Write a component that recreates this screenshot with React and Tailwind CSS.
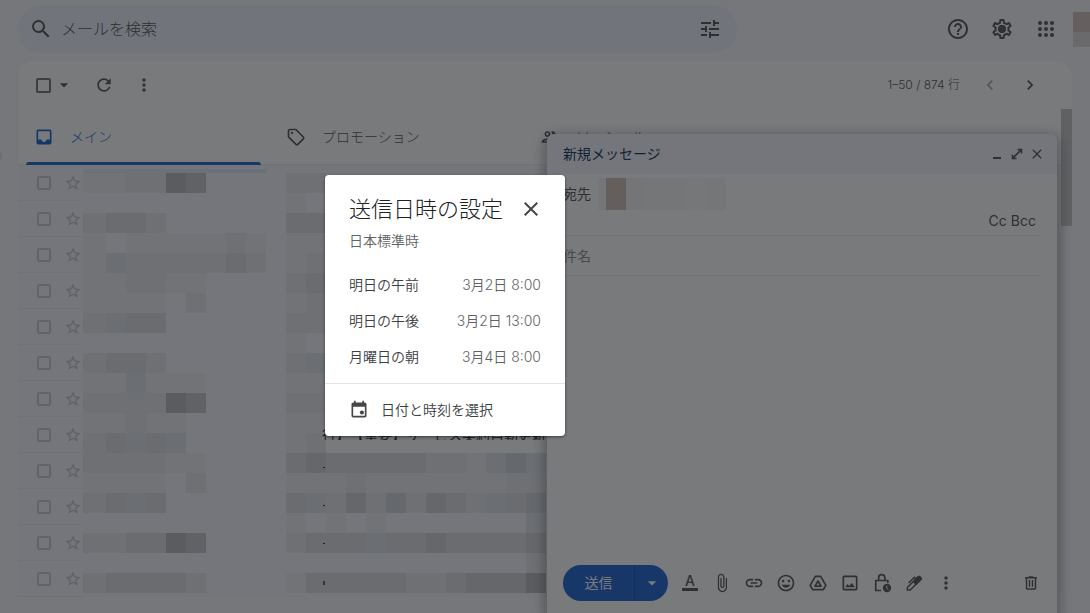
import {
  MdArrowDropDown,
  MdAttachFile,
  MdChevronLeft,
  MdChevronRight,
  MdClose,
  MdHelpOutline,
  MdInbox,
  MdLink,
  MdMoreVert,
  MdOutlineImage,
  MdOutlineMood,
  MdOutlinePeople,
  MdOutlineSettings,
  MdRefresh,
  MdSearch,
  MdStarOutline,
  MdTune,
} from 'react-icons/md';

const mailIds = [1, 2, 3, 4, 5, 6, 7, 8, 9, 10, 11, 12];

// one string per 20px band, one character per cell
const senderMosaic = [
  '112256....22...........',
  '..........1............',
  '2332......33...........',
  '1.1111121.11...........',
  '1b2222232.12...........',
  '112211....23...........',
  '1111.2....12...........',
  '2b33......22...........',
  '..........1............',
  '2332......2b...........',
  '11b111....11...........',
  '222256....22...........',
  '11211.....11...........',
  '23b3b.....12wwwwwwwwwww',
  '222211....3433333221bBb',
  '1111.2....1112111111122',
  '23b3......3b242B2432b3B',
  '..........1.1.1.......b',
  '223356....2333b33433334',
  '......................2',
  '233332....1333332234445',
];

const cellColors = {
  1: 'bg-[#ebedf1]',
  2: 'bg-[#e4e5e9]',
  3: 'bg-[#dbdce0]',
  4: 'bg-[#cfd0d5]',
  5: 'bg-[#b4b5b8]',
  6: 'bg-[#c1c2c5]',
  b: 'bg-[#dde4e9]',
  B: 'bg-[#ccd5da]',
  w: 'bg-white',
};

const scheduleOptions = [
  { label: '明日の午前', time: '3月2日 8:00' },
  { label: '明日の午後', time: '3月2日 13:00' },
  { label: '月曜日の朝', time: '3月4日 8:00' },
];

function TagIcon() {
  return (
    <svg width="20" height="20" viewBox="0 0 24 24" fill="none" stroke="currentColor" strokeWidth="2">
      <path d="M3 4.5C3 3.7 3.7 3 4.5 3h7.3l9 9a1.6 1.6 0 0 1 0 2.2l-6.6 6.6a1.6 1.6 0 0 1-2.2 0l-9-9z" />
      <circle cx="7.2" cy="7.2" r="1.4" fill="currentColor" stroke="none" />
    </svg>
  );
}

function AppsIcon() {
  return (
    <svg width="24" height="24" viewBox="0 0 24 24" fill="currentColor">
      {[6, 12, 18].map((y) => [6, 12, 18].map((x) => <circle key={`${x}-${y}`} cx={x} cy={y} r="2" />))}
    </svg>
  );
}

function ExpandIcon() {
  return (
    <svg width="12" height="12" viewBox="0 0 12 12" fill="none" stroke="currentColor" strokeWidth="1.6">
      <path d="M6.500 1.500h4v4M10.500 1.500l-9 9M1.500 6.500v4h4" />
    </svg>
  );
}

function DriveIcon() {
  return (
    <svg width="20" height="20" viewBox="0 0 24 24" fill="none" stroke="currentColor" strokeWidth="2" strokeLinejoin="round">
      <path d="M8.8 4h6.4l6.2 10.8-3 5.2H5.6l-3-5.2z" />
      <path d="M12 9.6 8.4 15.8h7.2z" />
    </svg>
  );
}

function LockClockIcon() {
  return (
    <svg width="20" height="20" viewBox="0 0 24 24" fill="none" stroke="currentColor" strokeWidth="2">
      <path d="M11 21H4.500V9h14.500v3M8 9V5.700a3.700 3.700 0 0 1 7.400 0V9" />
      <circle cx="18" cy="18" r="5" fill="currentColor" stroke="none" />
      <path d="M17.700 15.200v3l2 1.800" stroke="#fff" strokeWidth="1.200" />
    </svg>
  );
}

function PenIcon() {
  return (
    <svg width="20" height="20" viewBox="0 0 24 24" fill="none" stroke="currentColor" strokeWidth="1.8" strokeLinejoin="round">
      <path d="M4 20.500v-3.200L16.500 4.800l3.400 3L7.500 20.500z" />
      <path d="m11.500 10.500 5-5.500L20 8.200l-5.500 5.500z" fill="currentColor" />
      <path d="M17 5.500 18.500 4l2.500 2.500L19.500 8z" fill="currentColor" />
      <path d="M5.500 12 12.500 5l1.500 1.500" />
    </svg>
  );
}

function TrashIcon() {
  return (
    <svg width="18" height="18" viewBox="0 0 24 24" fill="currentColor">
      <path d="M15 4V3H9v1H4v2h1v13c0 1.100.9 2 2 2h10c1.100 0 2-.9 2-2V6h1V4h-5zm2 15H7V6h10v13zM9 8h2v9H9zm4 0h2v9h-2z" />
    </svg>
  );
}

function CalendarIcon() {
  return (
    <svg width="20" height="20" viewBox="0 0 24 24" fill="currentColor">
      <path d="M16 1v2H8V1H6v2H5c-1.100 0-2 .9-2 2v14c0 1.100.9 2 2 2h14c1.100 0 2-.9 2-2V5c0-1.100-.9-2-2-2h-1V1h-2zm3 18H5V8h14v11z" />
      <circle cx="15.500" cy="15" r="2.500" />
    </svg>
  );
}

function Header() {
  return (
    <header className="flex items-center justify-between pt-[5px] pb-2 text-[#444746]">
      <form className="ml-[18px] flex h-12 w-[66%] items-center rounded-full bg-[#eaf1fb] pr-[15px] pl-[11px]">
        <button type="button" aria-label="検索">
          <MdSearch size={24} />
        </button>
        <input
          className="ml-2 h-6 min-w-0 flex-1 text-base outline-none placeholder:text-[#444746]"
          aria-label="メールを検索"
          placeholder="メールを検索"
        />
        <button type="button" aria-label="検索オプション">
          <MdTune size={24} />
        </button>
      </form>
      <div className="flex items-center gap-5">
        <button type="button" aria-label="サポート"><MdHelpOutline size={24} /></button>
        <button type="button" aria-label="設定" className="relative">
          <MdOutlineSettings size={24} />
          <span className="absolute top-2 left-2 size-2 rounded-full bg-current" />
        </button>
        <button type="button" aria-label="アプリ"><AppsIcon /></button>
        <button type="button" aria-label="アカウント" className="-ml-[5px] w-[17px]">
          <span className="block h-5 bg-[#cfbcb6]" />
          <span className="block h-[15px] bg-[#d9d7d6]" />
        </button>
      </div>
    </header>
  );
}

function Toolbar() {
  return (
    <div className="flex h-12 items-center pr-8 pl-[18px] text-[#444746]">
      <input type="checkbox" aria-label="すべて選択" className="size-[15px] appearance-none rounded-[2px] border-2 border-[#686b6b]" />
      <button type="button" aria-label="選択" className="ml-[3px]"><MdArrowDropDown size={20} /></button>
      <button type="button" aria-label="更新" className="ml-5"><MdRefresh size={20} /></button>
      <button type="button" aria-label="その他" className="ml-5"><MdMoreVert size={20} /></button>
      <span className="ml-auto text-xs">1–50 / 874 行</span>
      <button type="button" aria-label="前" className="ml-5 text-[#a0a2a2]"><MdChevronLeft size={20} /></button>
      <button type="button" aria-label="次" className="ml-5"><MdChevronRight size={20} /></button>
    </div>
  );
}

function Tabs() {
  return (
    <nav className="flex h-14 border-b border-[#eceff1] text-sm text-[#444746]">
      <button type="button" className="relative flex w-[252px] items-center gap-4 pl-4 text-[#0b57d0]">
        <MdInbox size={20} />
        メイン
        <span className="absolute right-[9px] -bottom-px left-2 h-[3px] rounded-t bg-[#0b57d0]" />
      </button>
      <button type="button" className="flex w-[252px] items-center gap-4 pl-4">
        <TagIcon />
        プロモーション
      </button>
      <button type="button" className="flex w-[252px] items-center gap-4 pl-[18px]">
        <MdOutlinePeople size={20} />
        ソーシャル
      </button>
    </nav>
  );
}

function MailList() {
  return (
    <div className="flex rounded-b-2xl bg-[#f2f6fc]">
      <ul className="w-[65px]">
        {mailIds.map((id) => (
          <li key={id} className="flex h-9 items-center gap-[13px] border-b border-[#e5e8ed] pl-[19px] text-[#b9bcbe]">
            <input type="checkbox" aria-label={`メール ${id}`} className="size-[14px] shrink-0 appearance-none rounded-[2px] border-2 border-[#c3c5c7]" />
            <button type="button" aria-label="スター"><MdStarOutline size={18} /></button>
          </li>
        ))}
      </ul>
      <div className="relative pt-1">
        <div className="h-1 w-[183px] bg-[#dbe8fb]" />
        {senderMosaic.map((band, y) => (
          <div key={y} className="flex h-5">
            {band.split('').map((cell, x) => (
              <span key={x} className={`${x === 0 ? 'w-[23px]' : 'w-5'} ${cellColors[cell] ?? ''}`} />
            ))}
          </div>
        ))}
        <p className="absolute top-[260px] left-[239px] h-[15px] overflow-hidden bg-[#f2f6fc] text-sm leading-5 font-normal whitespace-nowrap text-[#202124] [text-spacing-trim:space-all]">
          行】【重要】サービス契約自動更新
        </p>
        <div className="absolute top-[302px] left-[240px] flex flex-col gap-[37px]">
          <span className="h-px w-0.5 bg-[#202124]" />
          <span className="h-px w-0.5 bg-[#202124]" />
          <span className="h-px w-0.5 bg-[#202124]" />
          <span className="h-1 w-0.5 bg-[#7a3b4a]" />
        </div>
      </div>
    </div>
  );
}

function ComposeWindow() {
  return (
    <section className="absolute right-[33px] bottom-0 flex h-[479px] w-[510px] flex-col rounded-t-lg bg-white text-sm text-[#444746] shadow-[0_4px_12px_4px_rgba(0,0,0,0.3)]">
      <div className="flex h-10 items-center rounded-t-lg bg-[#f2f6fc] px-4 text-[#041e49]">
        <h2 className="font-normal">新規メッセージ</h2>
        <div className="-mr-1 ml-auto flex items-center gap-1 text-[#444746]">
          <button type="button" aria-label="最小化" className="flex h-4 w-4 items-end justify-center pb-[3px]">
            <span className="h-0.5 w-2 bg-current" />
          </button>
          <button type="button" aria-label="全画面表示" className="flex w-4 justify-center"><ExpandIcon /></button>
          <button type="button" aria-label="閉じる"><MdClose size={16} /></button>
        </div>
      </div>
      <div className="mx-4 h-[62px] border-b border-[#e3e6e8]">
        <div className="flex h-[39px] items-center">
          <label htmlFor="to" className="font-normal">宛先</label>
          <div className="ml-[7px] flex h-8">
            <span className="w-2 bg-[#f6f5f5]" />
            <span className="w-5 bg-[#cab8b2]" />
            <span className="w-5 bg-[#f4f3f3]" />
            <span className="w-10 bg-[#f6f6f6]" />
            <span className="w-5 bg-[#f8f8f8]" />
            <span className="w-5 bg-[#f5f5f5]" />
          </div>
          <input id="to" className="min-w-0 flex-1 outline-none" />
        </div>
        <div className="-mt-0.5 flex justify-end gap-1 pr-[5px] leading-5 font-normal">
          <button type="button">Cc</button>
          <button type="button">Bcc</button>
        </div>
      </div>
      <input
        aria-label="件名"
        placeholder="件名"
        className="mx-4 h-10 border-b border-[#e3e6e8] font-normal outline-none placeholder:text-[#80868b]"
      />
      <textarea aria-label="本文" className="flex-1 resize-none outline-none" />
      <div className="flex h-[61px] items-center px-4">
        <div className="flex h-9 overflow-hidden rounded-full bg-[#0b57d0] font-normal text-white">
          <button type="button" className="w-[72px] border-r border-[#0842a0]">送信</button>
          <button type="button" aria-label="送信オプション" className="flex w-[33px] items-center justify-center">
            <MdArrowDropDown size={20} />
          </button>
        </div>
        <div className="ml-3 flex items-center gap-3">
          <button type="button" aria-label="書式設定" className="w-5 px-0.5">
            <span className="block border-b-3 text-sm leading-[14px] font-medium">A</span>
          </button>
          <button type="button" aria-label="ファイルを添付"><MdAttachFile size={20} /></button>
          <button type="button" aria-label="リンクを挿入"><MdLink size={20} /></button>
          <button type="button" aria-label="絵文字を挿入"><MdOutlineMood size={20} /></button>
          <button type="button" aria-label="ドライブ"><DriveIcon /></button>
          <button type="button" aria-label="写真を挿入"><MdOutlineImage size={20} /></button>
          <button type="button" aria-label="情報保護モード"><LockClockIcon /></button>
          <button type="button" aria-label="署名を挿入"><PenIcon /></button>
          <button type="button" aria-label="その他のオプション"><MdMoreVert size={20} /></button>
        </div>
        <button type="button" aria-label="下書きを破棄" className="mr-px ml-auto"><TrashIcon /></button>
      </div>
    </section>
  );
}

function ScheduleDialog() {
  return (
    <div
      role="dialog"
      aria-labelledby="schedule-title"
      className="absolute top-[175px] left-[325px] w-60 rounded bg-white text-sm font-[350] text-[#3c4043] shadow-[0_1px_3px_rgba(0,0,0,0.5)]"
    >
      <div className="flex items-center justify-between pt-[18px] pr-[22px] pl-6">
        <h1 id="schedule-title" className="text-[22px] leading-8 font-light text-[#202124]">送信日時の設定</h1>
        <button type="button" aria-label="閉じる" className="text-[#444746]"><MdClose size={24} /></button>
      </div>
      <p className="px-6 pt-1.5 leading-5 text-[#5f6368]">日本標準時</p>
      <div className="pt-4 pb-2">
        {scheduleOptions.map((option) => (
          <button key={option.label} type="button" className="flex h-9 w-full items-center justify-between px-6">
            <span>{option.label}</span>
            <span className="text-[#5f6368]">{option.time}</span>
          </button>
        ))}
      </div>
      <button type="button" className="flex h-[53px] w-full items-center gap-3 border-t border-[#e3e5e8] px-6">
        <span className="text-[#444746]"><CalendarIcon /></span>
        日付と時刻を選択
      </button>
    </div>
  );
}

export default function App() {
  return (
    <div className="relative min-h-screen overflow-hidden bg-[#f6f8fc] font-[Inter,'Noto_Sans_CJK_JP',sans-serif] font-light">
      <Header />
      <main className="relative mx-[18px] rounded-2xl bg-white">
        <Toolbar />
        <Tabs />
        <MailList />
        <div className="absolute top-12 right-0 h-[117px] w-[11px] bg-[#c1c1c1]" />
      </main>
      <span className="absolute top-[148px] -left-[14px] size-4 rounded-full bg-[#d3e3fd]" />
      <ComposeWindow />
      <div className="absolute inset-0 bg-[#202124]/60" />
      <ScheduleDialog />
    </div>
  );
}
